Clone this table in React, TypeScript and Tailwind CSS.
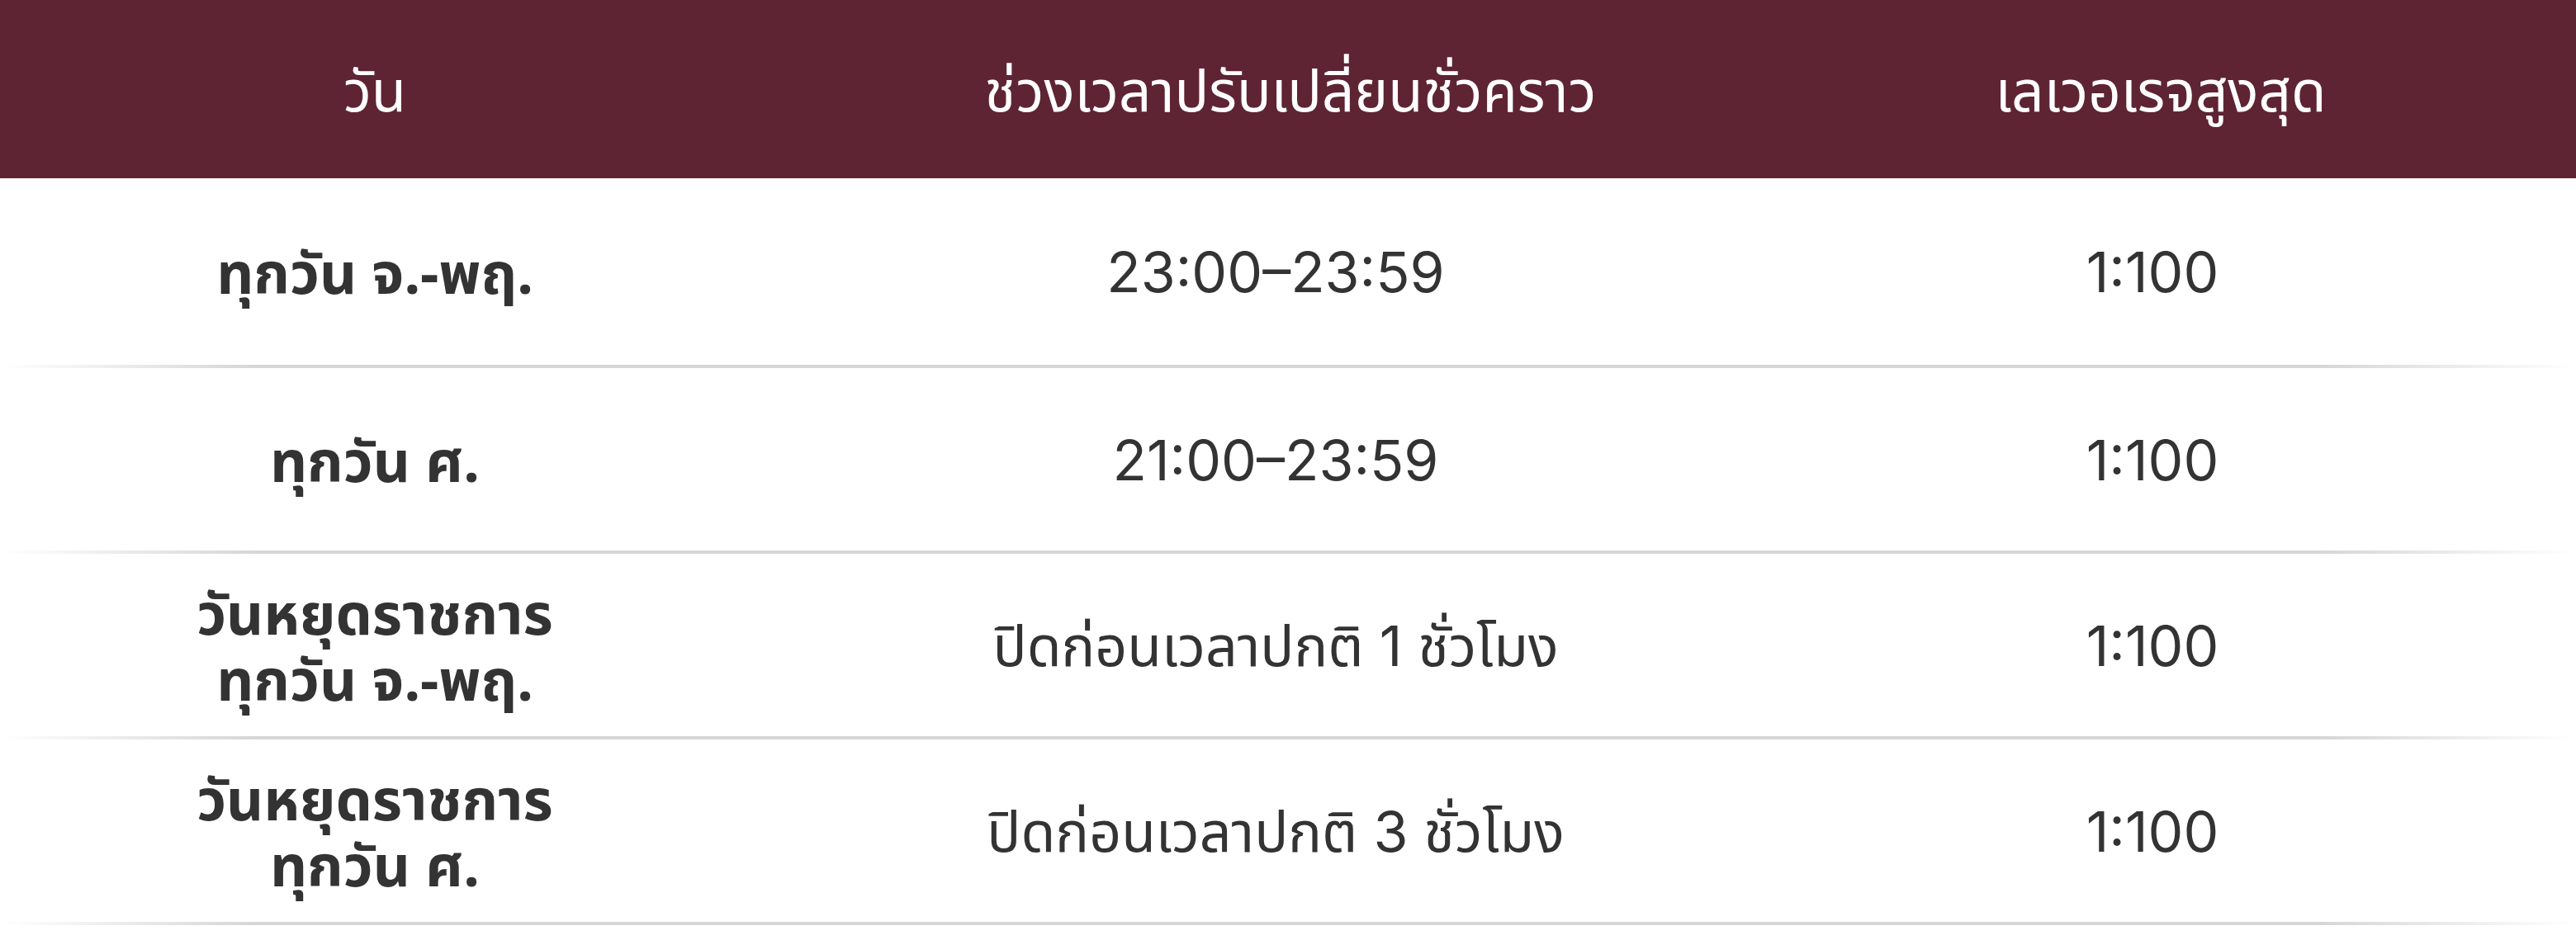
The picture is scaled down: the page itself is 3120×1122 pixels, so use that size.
const ROWS = [
  { day: ['ทุกวัน จ.-พฤ.'], time: '23:00–23:59', leverage: '1:100', first: true },
  { day: ['ทุกวัน ศ.'], time: '21:00–23:59', leverage: '1:100' },
  { day: ['วันหยุดราชการ', 'ทุกวัน จ.-พฤ.'], time: 'ปิดก่อนเวลาปกติ 1 ชั่วโมง', leverage: '1:100' },
  { day: ['วันหยุดราชการ', 'ทุกวัน ศ.'], time: 'ปิดก่อนเวลาปกติ 3 ชั่วโมง', leverage: '1:100' },
];

function Divider() {
  return (
    <div className="h-[4px] w-full bg-[linear-gradient(90deg,#ffffff00_0%,#d5d6d8_10%,#d5d6d8_90%,#ffffff00_100%)]" />
  );
}

export default function App() {
  return (
    <div className="w-[3120px] h-[1122px] bg-white font-['Inter','Noto_Sans','Noto_Sans_Thai',sans-serif] text-[#333333]">
      <div className="grid grid-cols-[908px_1274px_1fr] h-[216px] bg-[#5e2433] text-white text-[69px] leading-none font-['Noto_Sans','Noto_Sans_Thai',sans-serif]">
        <div className="flex items-center justify-center">วัน</div>
        <div className="flex items-center justify-center pl-[36px]">ช่วงเวลาปรับเปลี่ยนชั่วคราว</div>
        <div className="flex items-center justify-center pr-[68px]">เลเวอเรจสูงสุด</div>
      </div>

      {ROWS.map((row, i) => (
        <div key={i}>
          <div
            className={
              'grid grid-cols-[908px_1274px_1fr] text-[68px] ' + (row.first ? 'h-[226px]' : 'h-[221px]')
            }
          >
            <div className="flex flex-col items-center justify-center font-bold text-[70px] leading-[80px] text-center font-['Noto_Sans','Noto_Sans_Thai',sans-serif]">
              {row.day.map((line) => (
                <span key={line}>{line}</span>
              ))}
            </div>
            <div className="flex items-center justify-center leading-none">{row.time}</div>
            <div className="flex items-center justify-center pr-[88px] leading-none">{row.leverage}</div>
          </div>
          <Divider />
        </div>
      ))}
    </div>
  );
}
